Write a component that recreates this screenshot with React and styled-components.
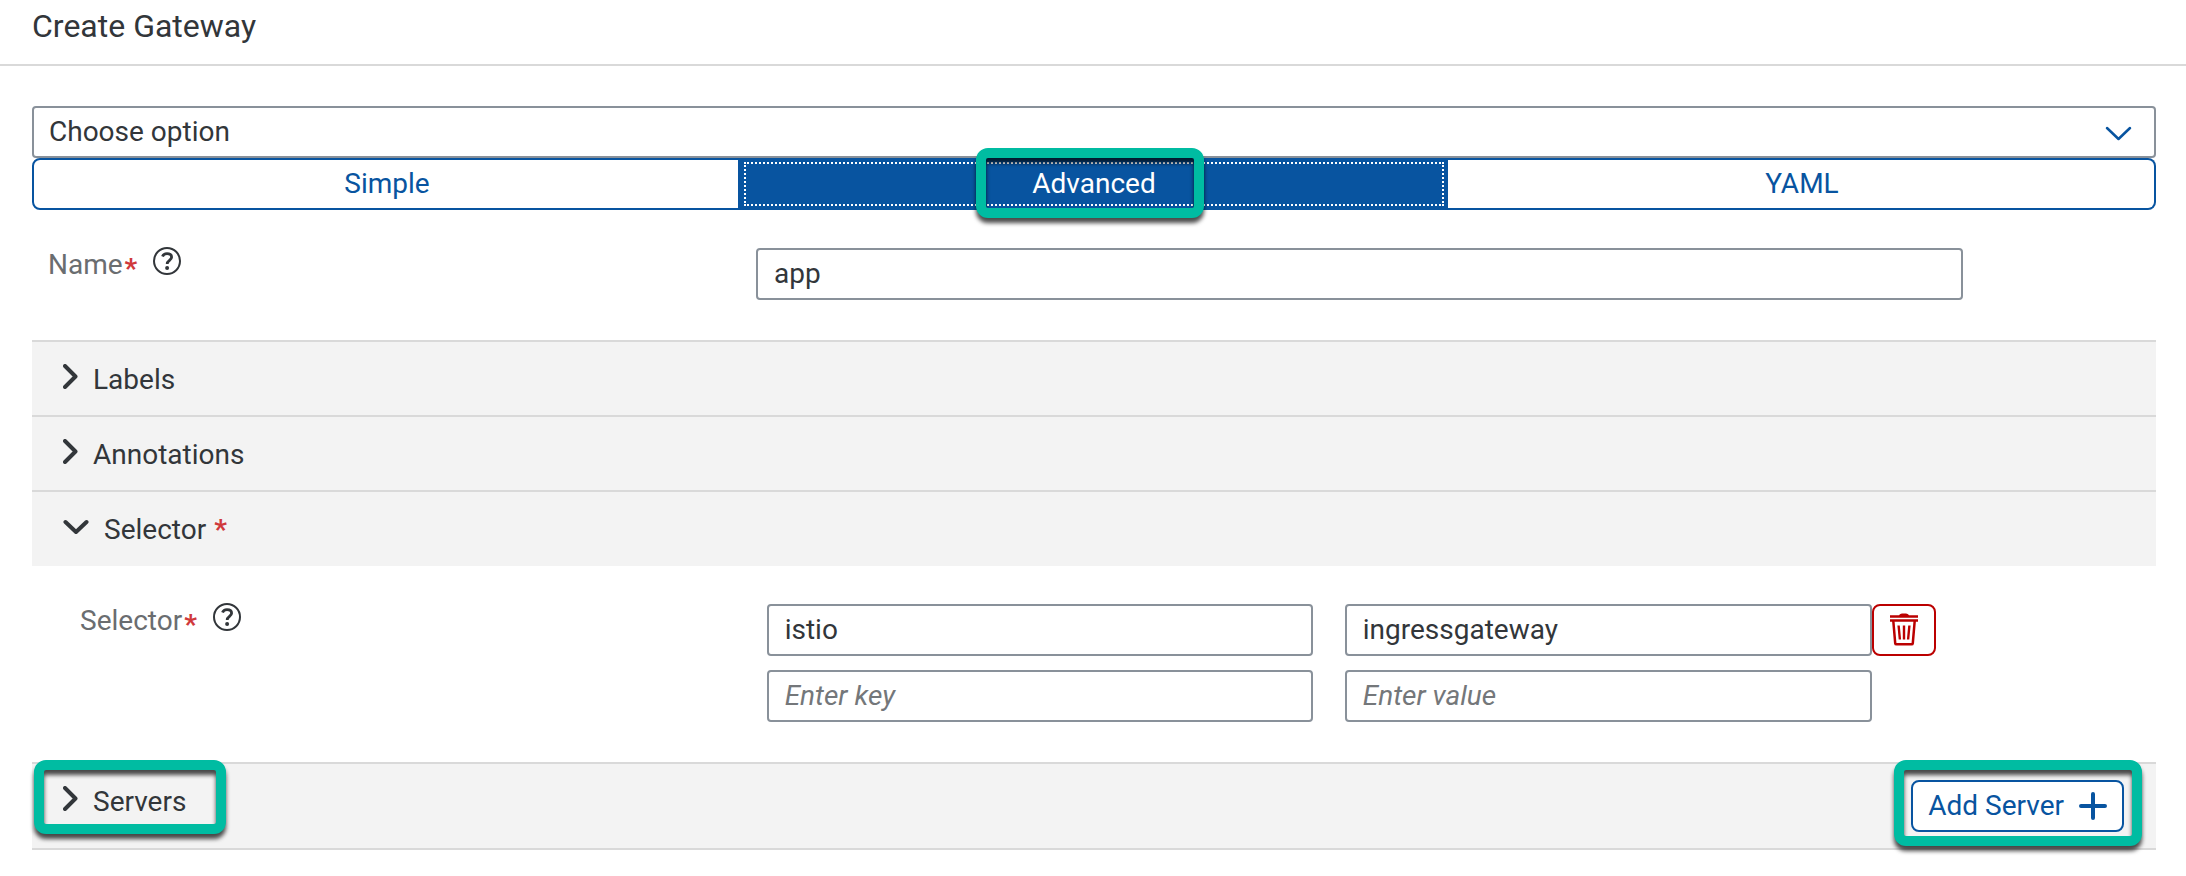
import React, { useState } from "react";
import styled, { createGlobalStyle, css } from "styled-components";

const color = {
  text: "#32363a",
  label: "#6a6d70",
  accent: "#0854a0",
  field: "#89919a",
  line: "#d9d9d9",
  panel: "#f3f3f3",
  required: "#d0393b",
  negative: "#bb0000",
  highlight: "#00bca2",
};

const GlobalStyle = createGlobalStyle`
  *, *::before, *::after { box-sizing: border-box; }
  body {
    margin: 0;
    background: #fff;
    color: ${color.text};
    font-family: Roboto, "Liberation Sans", sans-serif;
    font-size: 28px;
    line-height: 36px;
  }
  button, input, select { font: inherit; color: inherit; margin: 0; }
`;

const Header = styled.header`
  height: 66px;
  padding: 8px 32px 0;
  border-bottom: 2px solid ${color.line};
`;

const Title = styled.h1`
  margin: 0;
  font-size: 32px;
  line-height: 36px;
  font-weight: 400;
`;

const Form = styled.form`
  padding: 40px 30px 26px 32px;
`;

const SelectWrap = styled.div`
  position: relative;
`;

const Select = styled.select`
  display: block;
  width: 100%;
  height: 52px;
  padding: 0 72px 0 15px;
  border: 2px solid ${color.field};
  border-radius: 4px;
  background: #fff;
  appearance: none;
`;

const SelectArrow = styled.svg`
  position: absolute;
  right: 24px;
  top: 19px;
  pointer-events: none;
`;

const Segments = styled.div`
  display: grid;
  grid-template-columns: repeat(3, 1fr);
`;

const Segment = styled.button`
  position: relative;
  height: 52px;
  padding: 0 14px 0 16px;
  border: 2px solid ${color.accent};
  border-left-width: ${(p) => (p.$first ? "2px" : "0")};
  border-radius: ${(p) => (p.$first ? "8px 0 0 8px" : p.$last ? "0 8px 8px 0" : "0")};
  background: ${(p) => (p.$selected ? color.accent : "#fff")};
  color: ${(p) => (p.$selected ? "#fff" : color.accent)};
  ${(p) =>
    p.$selected &&
    css`
      outline: 2px dotted #fff;
      outline-offset: -6px;
    `}
`;

const Highlight = styled.span`
  position: absolute;
  inset: ${(p) => p.$inset};
  border: 10px solid ${color.highlight};
  border-radius: 12px;
  filter: drop-shadow(0 5px 2px rgba(0, 0, 0, 0.7));
  pointer-events: none;
`;

const FieldRow = styled.div`
  display: grid;
  grid-template-columns: 4fr 7fr 1fr;
  padding: ${(p) => p.$padding};
`;

const LabelCell = styled.div`
  display: flex;
  align-items: center;
  gap: 16px;
  height: 34px;
  padding-left: 16px;
`;

const Required = styled.span`
  color: ${color.required};
  font-weight: 700;
`;

const Label = styled.label`
  display: flex;
  gap: 2px;
  color: ${color.label};
  & > ${Required} {
    align-self: flex-end;
    line-height: 28px;
  }
`;

const HelpButton = styled.button`
  display: flex;
  padding: 0 0 8px;
  border: 0;
  background: none;
`;

const Cell = styled.div`
  padding: 0 16px;
`;

const Input = styled.input`
  display: block;
  width: 100%;
  min-width: 0;
  height: 52px;
  padding: 0 16px 2px;
  border: 2px solid ${color.field};
  border-radius: 4px;
  background: #fff;
  &::placeholder {
    color: #74777a;
    font-style: italic;
    opacity: 1;
  }
`;

const Panel = styled.section`
  border-top: 2px solid ${color.line};
  border-bottom: ${(p) => (p.$last ? `2px solid ${color.line}` : "0")};
`;

const PanelHeader = styled.div`
  display: flex;
  justify-content: space-between;
  align-items: flex-start;
  background: ${color.panel};
`;

const PanelTitle = styled.button`
  position: relative;
  display: flex;
  align-items: center;
  gap: 15px;
  height: ${(p) => (p.$open ? "74px" : "73px")};
  padding: 2px 0 0 31px;
  border: 0;
  background: none;
  & > svg { margin-bottom: 6px; }
`;

const TitleText = styled.span`
  display: flex;
  gap: 8px;
`;

const PairList = styled.div`
  display: grid;
  gap: 14px;
  padding: 0 16px;
`;

const Pair = styled.div`
  display: grid;
  grid-template-columns: 12fr 13fr;
  gap: 32px;
`;

const ValueCell = styled.div`
  display: grid;
  grid-template-columns: 1fr 64px;
`;

const OutlineButton = styled.button`
  position: relative;
  display: flex;
  align-items: center;
  justify-content: center;
  gap: 15px;
  height: 52px;
  padding: 0 15px;
  border: 2px solid ${(p) => (p.$negative ? color.negative : color.accent)};
  border-radius: 8px;
  background: #fff;
  color: ${(p) => (p.$negative ? color.negative : color.accent)};
`;

const Action = styled.div`
  padding: 16px 32px 16px 0;
`;

function Chevron({ open }) {
  return open ? (
    <svg width="26" height="25" viewBox="0 0 26 25" fill="none" stroke="currentColor" strokeWidth="4" strokeLinecap="round" strokeLinejoin="round" aria-hidden="true">
      <path d="M2.5 7 13 17 23.5 7" />
    </svg>
  ) : (
    <svg width="15" height="25" viewBox="0 0 15 25" fill="none" stroke="currentColor" strokeWidth="4" strokeLinecap="round" strokeLinejoin="round" aria-hidden="true">
      <path d="M2 2 12.5 12.5 2 23" />
    </svg>
  );
}

function Help({ about }) {
  return (
    <HelpButton type="button" aria-label={`Help for ${about}`}>
      <svg width="28" height="28" viewBox="0 0 28 28" fill="none" stroke="currentColor" aria-hidden="true">
        <circle cx="14" cy="14" r="13" strokeWidth="2" />
        <path d="M9.500 9.600C10.200 7.700 11.900 6.700 14 6.700c2.800 0 4.600 1.400 4.600 3.600 0 3-4.400 3.200-4.400 6.600" strokeWidth="2.800" />
        <circle cx="14.100" cy="21" r="2" fill="currentColor" stroke="none" />
      </svg>
    </HelpButton>
  );
}

function Trash() {
  return (
    <svg width="30" height="34" viewBox="0 0 30 34" fill="none" stroke="currentColor" strokeWidth="2" aria-hidden="true">
      <path d="M1 3.500h28M1 7.500h28" strokeWidth="2.300" />
      <path d="M10 3c0-2 2-2.500 5-2.500s5 .5 5 2.500z" fill="currentColor" stroke="none" />
      <path d="M4.300 8 6.200 30.200c.1.700.5 1.100 1.200 1.100h15.200c.7 0 1.100-.4 1.200-1.100L25.700 8" strokeWidth="2.500" />
      <path d="M9.600 12.500 10.900 26.500M15 12.500v14M20.400 12.500 19.100 26.500" strokeWidth="2.400" />
    </svg>
  );
}

function PanelHead({ title, open, required, onToggle, highlight, children }) {
  return (
    <PanelHeader>
      <PanelTitle type="button" aria-expanded={open} $open={open} onClick={onToggle}>
        <Chevron open={open} />
        <TitleText>
          {title}
          {required && <Required>*</Required>}
        </TitleText>
        {highlight && <Highlight $inset="-4px -40px 3px 2px" />}
      </PanelTitle>
      {children}
    </PanelHeader>
  );
}

const modes = ["Simple", "Advanced", "YAML"];

export default function App() {
  const [mode, setMode] = useState("Advanced");
  const [open, setOpen] = useState({ Selector: true });
  const toggle = (name) => () => setOpen((o) => ({ ...o, [name]: !o[name] }));

  return (
    <>
      <GlobalStyle />
      <Header>
        <Title>Create Gateway</Title>
      </Header>
      <Form onSubmit={(e) => e.preventDefault()}>
        <SelectWrap>
          <Select aria-label="Choose option" defaultValue="">
            <option value="">Choose option</option>
          </Select>
          <SelectArrow width="27" height="16" viewBox="0 0 27 16" fill="none" stroke={color.accent} strokeWidth="2.500" strokeLinecap="round" strokeLinejoin="round" aria-hidden="true">
            <path d="M2 3 13.500 14 25 3" />
          </SelectArrow>
        </SelectWrap>
        <Segments>
          {modes.map((name, i) => (
            <Segment
              key={name}
              type="button"
              aria-pressed={mode === name}
              $first={i === 0}
              $last={i === modes.length - 1}
              $selected={mode === name}
              onClick={() => setMode(name)}
            >
              {name}
              {name === "Advanced" && <Highlight $inset="-12px calc(50% - 111px) -10px calc(50% - 117px)" />}
            </Segment>
          ))}
        </Segments>

        <FieldRow $padding="38px 0 40px">
          <LabelCell>
            <Label htmlFor="name">
              Name<Required>*</Required>
            </Label>
            <Help about="Name" />
          </LabelCell>
          <Cell>
            <Input id="name" defaultValue="app" />
          </Cell>
        </FieldRow>

        <Panel>
          <PanelHead title="Labels" open={!!open.Labels} onToggle={toggle("Labels")} />
        </Panel>
        <Panel>
          <PanelHead title="Annotations" open={!!open.Annotations} onToggle={toggle("Annotations")} />
        </Panel>
        <Panel>
          <PanelHead title="Selector" required open={!!open.Selector} onToggle={toggle("Selector")} />
          {open.Selector && (
            <FieldRow $padding="38px 32px 40px">
              <LabelCell>
                <Label htmlFor="selector-key">
                  Selector<Required>*</Required>
                </Label>
                <Help about="Selector" />
              </LabelCell>
              <PairList>
                <Pair>
                  <Input id="selector-key" defaultValue="istio" />
                  <ValueCell>
                    <Input aria-label="Selector value" defaultValue="ingressgateway" />
                    <OutlineButton type="button" $negative aria-label="Delete">
                      <Trash />
                    </OutlineButton>
                  </ValueCell>
                </Pair>
                <Pair>
                  <Input aria-label="New selector key" placeholder="Enter key" />
                  <ValueCell>
                    <Input aria-label="New selector value" placeholder="Enter value" />
                  </ValueCell>
                </Pair>
              </PairList>
            </FieldRow>
          )}
        </Panel>
        <Panel $last>
          <PanelHead title="Servers" open={!!open.Servers} onToggle={toggle("Servers")} highlight>
            <Action>
              <OutlineButton type="button">
                Add Server
                <svg width="28" height="28" viewBox="0 0 28 28" fill="none" stroke="currentColor" strokeWidth="4" strokeLinecap="round" aria-hidden="true">
                  <path d="M14 2v24M2 14h24" />
                </svg>
                <Highlight $inset="-22px -20px -16px -19px" />
              </OutlineButton>
            </Action>
          </PanelHead>
        </Panel>
      </Form>
    </>
  );
}
